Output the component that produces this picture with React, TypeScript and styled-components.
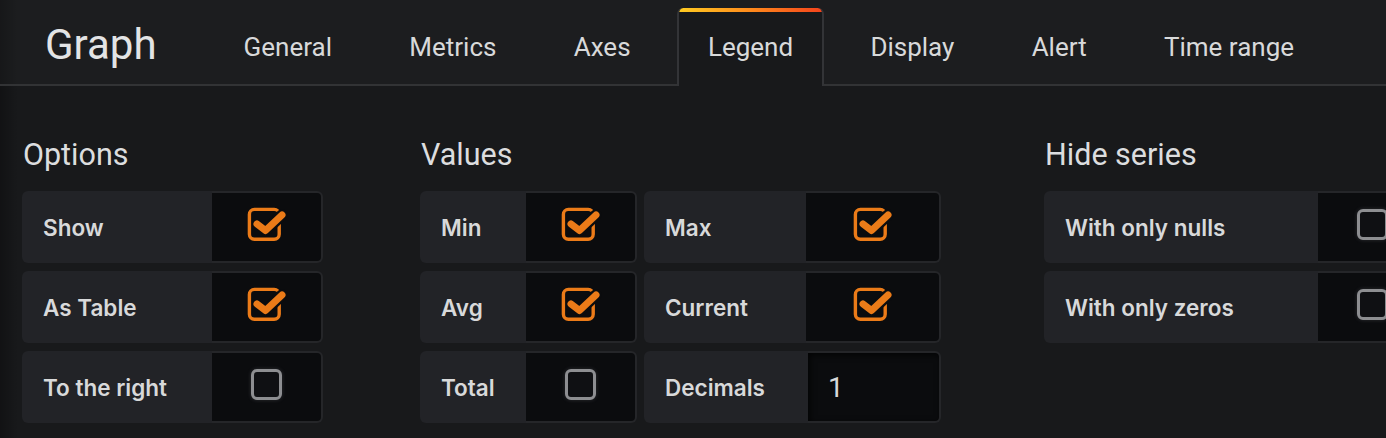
import React from "react";
import styled, { createGlobalStyle } from "styled-components";

const Global = createGlobalStyle`
  html, body { margin: 0; padding: 0; background: #18191b; }
  body { overflow: hidden; }
  * { box-sizing: border-box; }
`;

const Root = styled.div`
  width: 1386px;
  height: 438px;
  overflow: hidden;
  background-color: #18191b;
  background-image: linear-gradient(to right, rgba(0, 0, 0, 0.28), rgba(0, 0, 0, 0) 18px);
  font-family: Roboto, "Liberation Sans", sans-serif;
  color: #d8d9da;
`;

const Header = styled.div`
  height: 86px;
  display: flex;
  align-items: flex-end;
  padding-left: 45px;
  border-bottom: 2px solid #323335;
  background-image: linear-gradient(to right, rgba(0, 0, 0, 0.2), rgba(0, 0, 0, 0) 18px);
  background-color: #1c1d1f;
`;

const Title = styled.h1`
  margin: 0 56px 0 0;
  align-self: center;
  font-size: 42px;
  font-weight: 400;
  line-height: 1;
  padding-top: 6px;
  color: #e3e4e5;
`;

const Tabs = styled.ul`
  list-style: none;
  margin: 0 0 -2px 0;
  padding: 0;
  display: flex;
  align-items: flex-end;
`;

const Tab = styled.li<{ $active?: boolean }>`
  height: 78px;
  margin-right: 15.3px;
  padding: 4px 29px 5px;
  display: flex;
  align-items: center;
  font-size: 26px;
  color: #d8d9da;
  border: 2px solid transparent;
  border-top: none;
  border-bottom: none;
  border-radius: 6px 6px 0 0;
  ${(p) =>
    p.$active &&
    `
    border-color: #333437;
    background-color: #18191b;
    background-image: linear-gradient(to right, #ffcb22 0%, #ff8a1c 50%, #f4441c 100%);
    background-size: 100% 4px;
    background-repeat: no-repeat;
    background-position: top left;
  `}
`;

const Content = styled.div`
  display: flex;
  padding: 51px 0 0 22px;
`;

const Section = styled.section<{ $width: number; $gap: number }>`
  flex: 0 0 ${(p) => p.$width}px;
  margin-right: ${(p) => p.$gap}px;
`;

const Heading = styled.h2`
  margin: 0 0 18px 1px;
  font-size: 30.5px;
  font-weight: 400;
  line-height: 36px;
  color: #dcdddf;
`;

const Columns = styled.div`
  display: flex;
  gap: 7px;
`;

const Stack = styled.div`
  display: flex;
  flex-direction: column;
  gap: 8px;
`;

const Row = styled.div<{ $width: number }>`
  display: flex;
  width: ${(p) => p.$width}px;
  height: 72px;
`;

const Label = styled.div<{ $width: number }>`
  flex: 0 0 ${(p) => p.$width}px;
  display: flex;
  align-items: center;
  padding-left: 21px;
  background: #222327;
  border-radius: 6px 0 0 6px;
  font-family: Inter, "Open Sans", sans-serif;
  font-weight: 600;
  font-size: 22.5px;
  color: #d8d9da;
  white-space: nowrap;
`;

const Cell = styled.div`
  flex: 1 0 auto;
  display: flex;
  align-items: center;
  justify-content: center;
  background: #0b0c0e;
  border: 2px solid #252629;
  border-left: none;
  border-radius: 0 6px 6px 0;
`;

const Input = styled.input`
  flex: 1 0 auto;
  width: 0;
  height: 72px;
  padding: 0 0 0 20px;
  margin: 0;
  outline: none;
  background: #0b0c0e;
  border: 2px solid #252629;
  border-left: none;
  border-radius: 0 6px 6px 0;
  box-shadow: inset 2px 2px 6px rgba(0, 0, 0, 0.7);
  font-family: Roboto, "Liberation Sans", sans-serif;
  font-size: 28px;
  color: #d8d9da;
`;

const CheckSvg = styled.svg`
  display: block;
  width: 42px;
  height: 36px;
  margin-top: -6px;
`;

const EmptyBox = styled.span`
  display: block;
  width: 31px;
  height: 31px;
  margin-top: -5px;
  border: 3px solid #8d8e91;
  border-radius: 6px;
  background: #0f1013;
  box-shadow: 0 0 4px rgba(200, 200, 210, 0.18);
`;

const Checked = () => (
  <CheckSvg viewBox="0 0 42 36">
    <rect x="3.4" y="3.4" width="29.8" height="29.8" rx="5" fill="none" stroke="#eb7b18" strokeWidth="3.4" />
    <polyline points="19.5,24.5 36,9" fill="none" stroke="#0b0c0e" strokeWidth="11.5" strokeLinecap="round" />
    <polyline
      points="11,18 19.5,24.5 36,9"
      fill="none"
      stroke="#eb7b18"
      strokeWidth="7"
      strokeLinecap="round"
      strokeLinejoin="round"
    />
  </CheckSvg>
);

type Item = { label: string; checked?: boolean; input?: string };

const FormRow = ({ item, labelWidth, width }: { item: Item; labelWidth: number; width: number }) => (
  <Row $width={width}>
    <Label $width={labelWidth}>{item.label}</Label>
    {item.input !== undefined ? (
      <Input value={item.input} readOnly />
    ) : (
      <Cell>{item.checked ? <Checked /> : <EmptyBox />}</Cell>
    )}
  </Row>
);

const tabs = ["General", "Metrics", "Axes", "Legend", "Display", "Alert", "Time range"];

const options: Item[] = [
  { label: "Show", checked: true },
  { label: "As Table", checked: true },
  { label: "To the right", checked: false },
];

const valuesA: Item[] = [
  { label: "Min", checked: true },
  { label: "Avg", checked: true },
  { label: "Total", checked: false },
];

const valuesB: Item[] = [
  { label: "Max", checked: true },
  { label: "Current", checked: true },
  { label: "Decimals", input: "1" },
];

const hide: Item[] = [
  { label: "With only nulls", checked: false },
  { label: "With only zeros", checked: false },
];

export default function App() {
  return (
    <Root>
      <Global />
      <Header>
        <Title>Graph</Title>
        <Tabs>
          {tabs.map((t) => (
            <Tab key={t} $active={t === "Legend"}>
              {t}
            </Tab>
          ))}
        </Tabs>
      </Header>
      <Content>
        <Section $width={301} $gap={97}>
          <Heading>Options</Heading>
          <Stack>
            {options.map((o) => (
              <FormRow key={o.label} item={o} labelWidth={190} width={301} />
            ))}
          </Stack>
        </Section>
        <Section $width={521} $gap={103}>
          <Heading>Values</Heading>
          <Columns>
            <Stack>
              {valuesA.map((o) => (
                <FormRow key={o.label} item={o} labelWidth={106} width={217} />
              ))}
            </Stack>
            <Stack>
              {valuesB.map((o) => (
                <FormRow
                  key={o.label}
                  item={o}
                  labelWidth={o.input !== undefined ? 164 : 162}
                  width={297}
                />
              ))}
            </Stack>
          </Columns>
        </Section>
        <Section $width={385} $gap={0}>
          <Heading>Hide series</Heading>
          <Stack>
            {hide.map((o) => (
              <FormRow key={o.label} item={o} labelWidth={274} width={385} />
            ))}
          </Stack>
        </Section>
      </Content>
    </Root>
  );
}
